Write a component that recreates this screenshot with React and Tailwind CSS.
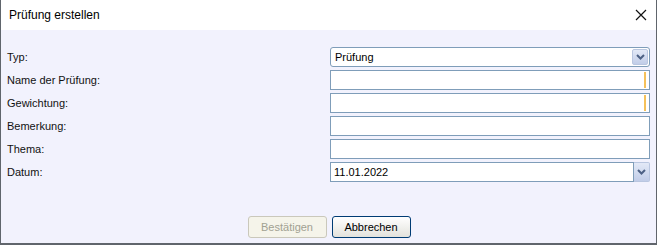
import React from "react";

const font = { fontFamily: '"Liberation Sans", Arial, sans-serif' };

function Chevron() {
  return (
    <svg width="9" height="6" viewBox="0 0 9 6">
      <path d="M1 1 L4.5 4.5 L8 1" fill="none" stroke="#4d6185" strokeWidth="2" />
    </svg>
  );
}

function DropButton() {
  return (
    <div className="w-[16px] h-[16px] flex items-center justify-center rounded-[2px] border border-[#b9c6e0] bg-gradient-to-b from-[#e3e9f7] to-[#c1cde8]">
      <Chevron />
    </div>
  );
}

function Field({ children, required }) {
  return (
    <div className="h-[20px] w-[320px] flex items-center border border-[#7f9db9] bg-white">
      <div className="flex-1 flex items-center pl-[4px] text-[11px] text-black">{children}</div>
      {required && <div className="w-[2px] h-[16px] bg-[#f5c15a] mr-[3px]" />}
    </div>
  );
}

export default function App() {
  const rows = [
    { label: "Typ:", kind: "combo", value: "Prüfung" },
    { label: "Name der Prüfung:", required: true },
    { label: "Gewichtung:", required: true },
    { label: "Bemerkung:" },
    { label: "Thema:" },
    { label: "Datum:", kind: "date", value: "11.01.2022" },
  ];

  return (
    <div className="w-[657px] h-[245px] bg-[#f2f2fd]" style={font}>
      <div className="w-full h-full flex flex-col border-l border-r border-b-2 border-[#60656c]">
        {/* title bar */}
        <div className="h-[30px] bg-white flex items-center justify-between pl-[8px] pr-[9px] shrink-0">
          <span className="text-[12px] text-black">Prüfung erstellen</span>
          <svg width="12" height="12" viewBox="0 0 12 12">
            <path d="M1 1 L11 11 M11 1 L1 11" stroke="#111" strokeWidth="1.2" />
          </svg>
        </div>

        {/* form */}
        <div className="flex flex-col gap-[3px] pt-[17px] pl-[6px]">
          {rows.map((r) => (
            <div key={r.label} className="flex items-center h-[20px]">
              <div className="w-[323px] text-[11px] text-[#111]">{r.label}</div>
              {r.kind === "combo" && (
                <div className="h-[20px] w-[320px] flex items-center justify-between border border-[#7f9db9] rounded-[3px] bg-white pr-[1px]">
                  <span className="pl-[4px] text-[11px] text-black">{r.value}</span>
                  <DropButton />
                </div>
              )}
              {r.kind === "date" && (
                <div className="flex items-center">
                  <div className="h-[20px] w-[304px] flex items-center border border-[#7f9db9] bg-white pl-[3px] text-[11px] text-black">
                    {r.value}
                  </div>
                  <div className="h-[20px] w-[16px] flex items-center justify-center border border-l-0 border-[#b9c6e0] rounded-r-[2px] bg-gradient-to-b from-[#e3e9f7] to-[#c1cde8]">
                    <Chevron />
                  </div>
                </div>
              )}
              {!r.kind && <Field required={r.required} />}
            </div>
          ))}
        </div>

        {/* buttons */}
        <div className="flex justify-center gap-[5px] mt-[34px] pl-[1px]">
          <button className="w-[79px] h-[22px] rounded-[3px] border border-[#cac8bb] bg-[#f5f4ea] text-[11px] text-[#a1a192]">
            Bestätigen
          </button>
          <button className="w-[79px] h-[22px] rounded-[3px] border border-[#003c74] bg-gradient-to-b from-white to-[#e3e2dc] text-[11px] text-black">
            Abbrechen
          </button>
        </div>
      </div>
    </div>
  );
}
